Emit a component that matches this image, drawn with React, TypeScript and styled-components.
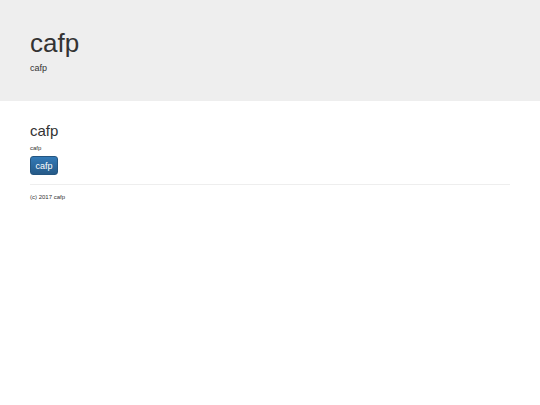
import styled, { createGlobalStyle } from "styled-components";

const Global = createGlobalStyle`
  html, body { margin: 0; padding: 0; background: #fff; }
  body {
    font-family: "Liberation Sans", Arial, sans-serif;
    color: #333;
  }
`;

const Jumbotron = styled.header`
  background: #eee;
  height: 101px;
  box-sizing: border-box;
  padding-top: 29px;
`;

const Container = styled.div`
  width: 480px;
  margin: 0 auto;
`;

const BigTitle = styled.h1`
  margin: 0;
  font-size: 26px;
  line-height: 29px;
  font-weight: 400;
`;

const Lead = styled.p`
  margin: 4px 0 0;
  font-size: 9px;
  line-height: 12px;
  font-weight: 400;
`;

const Main = styled.main`
  padding-top: 21px;
`;

const Heading = styled.h2`
  margin: 0;
  font-size: 15px;
  line-height: 18px;
  font-weight: 400;
`;

const Small = styled.p`
  margin: 4px 0 0;
  font-size: 6px;
  line-height: 8px;
`;

const Button = styled.a`
  display: inline-flex;
  align-items: center;
  justify-content: center;
  margin-top: 4px;
  width: 28px;
  height: 19px;
  box-sizing: border-box;
  border: 1px solid #245580;
  border-radius: 3px;
  background: linear-gradient(#337ab7, #265a88);
  color: #fff;
  font-size: 9px;
  text-decoration: none;
`;

const Rule = styled.hr`
  margin: 9px 0 0;
  border: 0;
  border-top: 1px solid #eee;
`;

const Footer = styled.footer`
  margin-top: 8px;
  font-size: 6px;
  line-height: 8px;
`;

export default function App() {
  return (
    <>
      <Global />
      <Jumbotron>
        <Container>
          <BigTitle>cafp</BigTitle>
          <Lead>cafp</Lead>
        </Container>
      </Jumbotron>
      <Main>
        <Container>
          <Heading>cafp</Heading>
          <Small>cafp</Small>
          <Button href="#">cafp</Button>
          <Rule />
          <Footer>(c) 2017 cafp</Footer>
        </Container>
      </Main>
    </>
  );
}
